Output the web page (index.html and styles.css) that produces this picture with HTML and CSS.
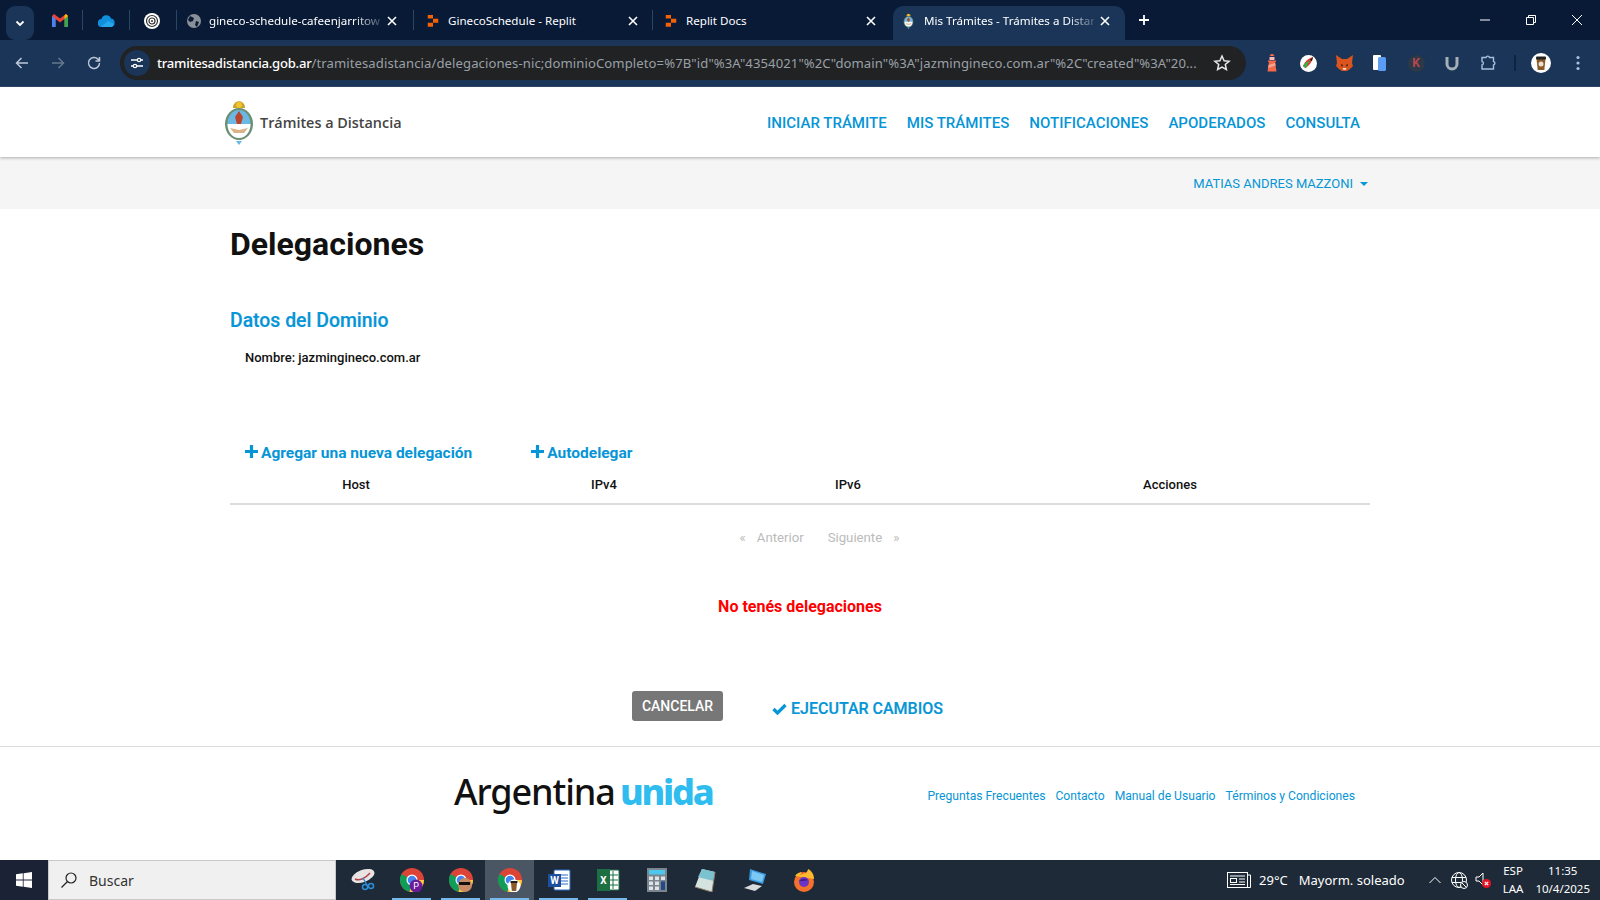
FILE: index.html
```html
<!DOCTYPE html>
<html lang="es">
<head>
  <meta charset="utf-8" />
  <title>Mis Trámites - Trámites a Distancia</title>
  <link rel="stylesheet" href="styles.css">
</head>
<body>
<svg class="defs" width="0" height="0">
  <defs>
    <symbol id="i-close" viewBox="0 0 12 12"><path d="M2 2l8 8M10 2l-8 8" stroke="#fff" stroke-width="1.6" fill="none"/></symbol>
    <symbol id="i-replit" viewBox="0 0 16 16"><path d="M2 1h6v4H2zM8 5.500h6v4.500H8zM2 10h6v4.500H2z" fill="#f26207"/></symbol>
    <symbol id="i-arms" viewBox="0 0 30 46">
      <path d="M9 9c0-9 12-9 12 0z" fill="#c9a227"/>
      <circle cx="15" cy="6" r="3" fill="#f2c230"/>
      <ellipse cx="15" cy="25" rx="14" ry="16" fill="#6b8f71"/>
      <ellipse cx="15" cy="25" rx="11.500" ry="14" fill="#6bb8e4"/>
      <path d="M3.500 25h23c0 8-5 14-11.500 14S3.500 33 3.500 25z" fill="#fff"/>
      <path d="M15 12l4 6-2 7h-4l-2-7z" fill="#b8452c"/>
      <path d="M6 29l9 2 9-2-4 5h-10z" fill="#d9b48a"/>
      <path d="M12 42h6l-3 4z" fill="#6bb8e4"/>
    </symbol>
    <symbol id="i-chrome" viewBox="0 0 24 24">
      <circle cx="12" cy="12" r="12" fill="#db4437"/>
      <path d="M12 12L1.600 6a12 12 0 0 0 8 17.800z" fill="#0f9d58"/>
      <path d="M12 12h12A12 12 0 0 1 9.600 23.800z" fill="#ffcd40"/>
      <circle cx="12" cy="12" r="5.500" fill="#fff"/>
      <circle cx="12" cy="12" r="4.300" fill="#4285f4"/>
    </symbol>
  </defs>
</svg>

<div class="tabstrip">
  <button class="tab-search"><svg width="12" height="12" viewBox="0 0 12 12"><path d="M2.500 4.500L6 8l3.500-3.500" stroke="#fff" stroke-width="1.800" fill="none"/></svg></button>
  <div class="pinned pinned-first">
    <svg width="16" height="13" viewBox="0 0 16 13"><path d="M0 2v11h3.500V5L8 8.500 12.500 5v8H16V2l-2-2L8 4.500 2 0z" fill="#ea4335"/><path d="M0 2v11h3.500V5z" fill="#4285f4"/><path d="M12.500 5v8H16V2z" fill="#34a853"/><path d="M14 0l2 2-3.500 3V1.500z" fill="#fbbc04"/></svg>
  </div>
  <i class="tab-sep"></i>
  <div class="pinned">
    <svg width="17" height="12" viewBox="0 0 17 12"><path d="M4 12a4 4 0 0 1-.5-8A5 5 0 0 1 13 3.500 4.300 4.300 0 0 1 13 12z" fill="#0f8fdc"/><path d="M3 12l7-6 6 3-2 3z" fill="#28a8ea"/></svg>
  </div>
  <i class="tab-sep"></i>
  <div class="pinned pinned-print">
    <svg width="16" height="16" viewBox="0 0 16 16"><circle cx="8" cy="8" r="8" fill="#fff"/><circle cx="8" cy="8" r="5.500" fill="none" stroke="#333" stroke-width="1.200"/><circle cx="8" cy="8" r="3" fill="none" stroke="#333" stroke-width="1.200"/><circle cx="8" cy="8" r="1" fill="#333"/></svg>
  </div>
  <i class="tab-sep"></i>
  <div class="tab tab-first">
    <svg class="tab-icon" width="14" height="14" viewBox="0 0 14 14"><circle cx="7" cy="7" r="7" fill="#8a9099"/><path d="M3 2l4 2-1 3-3 1-2-2zM9 7l3 1-2 5-2-2z" fill="#0a1a33"/></svg>
    <span class="tab-title">gineco-schedule-cafeenjarritow</span>
    <svg class="tab-x" width="12" height="12"><use href="#i-close"/></svg>
  </div>
  <i class="tab-sep"></i>
  <div class="tab tab-replit">
    <svg class="tab-icon" width="14" height="14"><use href="#i-replit"/></svg>
    <span class="tab-title">GinecoSchedule - Replit</span>
    <svg class="tab-x" width="12" height="12"><use href="#i-close"/></svg>
  </div>
  <i class="tab-sep"></i>
  <div class="tab tab-docs">
    <svg class="tab-icon" width="14" height="14"><use href="#i-replit"/></svg>
    <span class="tab-title">Replit Docs</span>
    <svg class="tab-x" width="12" height="12"><use href="#i-close"/></svg>
  </div>
  <div class="tab tab-active">
    <svg class="tab-icon" width="11" height="16"><use href="#i-arms"/></svg>
    <span class="tab-title">Mis Trámites - Trámites a Distan</span>
    <svg class="tab-x" width="12" height="12"><use href="#i-close"/></svg>
  </div>
  <svg class="tab-new" width="14" height="14" viewBox="0 0 14 14"><path d="M7 2v10M2 7h10" stroke="#fff" stroke-width="1.800"/></svg>
  <div class="win-btns">
    <svg width="12" height="12" viewBox="0 0 12 12"><path d="M1 6h10" stroke="#fff"/></svg>
    <svg width="12" height="12" viewBox="0 0 12 12"><path d="M1.500 3.500h7v7h-7zM3.500 3.500v-2h7v7h-2" stroke="#fff" fill="none"/></svg>
    <svg width="12" height="12" viewBox="0 0 12 12"><path d="M1 1l10 10M11 1L1 11" stroke="#fff"/></svg>
  </div>
</div>

<div class="toolbar">
  <svg class="nav-ic" width="16" height="16" viewBox="0 0 16 16"><path d="M14 8H3M7.500 3L2.500 8l5 5" stroke="#bcc8d8" stroke-width="1.500" fill="none"/></svg>
  <svg class="nav-ic" width="16" height="16" viewBox="0 0 16 16"><path d="M2 8h11M8.500 3l5 5-5 5" stroke="#66788f" stroke-width="1.500" fill="none"/></svg>
  <svg class="nav-ic" width="16" height="16" viewBox="0 0 16 16"><path d="M13.500 8a5.500 5.500 0 1 1-1.600-3.900L13.500 6M13.500 2v4h-4" stroke="#bcc8d8" stroke-width="1.500" fill="none"/></svg>
  <div class="urlbar">
    <span class="site-info"><svg width="14" height="14" viewBox="0 0 14 14"><path d="M1 4h6M11 4h2M1 10h2M7 10h6" stroke="#fff" stroke-width="1.300"/><circle cx="9" cy="4" r="1.700" fill="none" stroke="#fff" stroke-width="1.200"/><circle cx="5" cy="10" r="1.700" fill="none" stroke="#fff" stroke-width="1.200"/></svg></span>
    <span class="url"><b>tramitesadistancia.gob.ar</b>/tramitesadistancia/delegaciones-nic;dominioCompleto=%7B"id"%3A"4354021"%2C"domain"%3A"jazmingineco.com.ar"%2C"created"%3A"20...</span>
    <svg class="star" width="18" height="18" viewBox="0 0 18 18"><path d="M9 2l2.100 4.700 5 .5-3.800 3.300 1.100 5L9 13l-4.400 2.500 1.100-5L1.900 7.200l5-.5z" fill="none" stroke="#e6e8ea" stroke-width="1.500"/></svg>
  </div>
  <div class="ext-row">
    <span class="ext"><svg width="14" height="18" viewBox="0 0 14 18"><path d="M6 0h2l1.500 2H4.500z" fill="#f4694a"/><path d="M4.500 3h5v3h-5z" fill="#fbb"/><path d="M3 6.500h8v1.500H3z" fill="#f4694a"/><path d="M4 8h6l1.500 9.500h-9z" fill="#f4694a"/><path d="M3.600 11l6.600-2 .4 2.500-7.500 2.500z" fill="#f9a58e"/></svg></span>
    <span class="ext"><svg width="17" height="17" viewBox="0 0 17 17"><circle cx="8.500" cy="8.500" r="8.500" fill="#fff"/><path d="M3 11c2-5 6-8 10-9-1 5-4 9-8 11z" fill="#e8362c"/><path d="M3 11c2-3 5-5 7-6l-4 8z" fill="#2cb34a"/><path d="M10 5l3-3-1 4z" fill="#111"/></svg></span>
    <span class="ext"><svg width="17" height="16" viewBox="0 0 17 16"><path d="M0 0l6 4h5l6-4-1 8 1 3-3 3-3 2H6l-3-2-3-3 1-3z" fill="#d9541e"/><path d="M5 9l2 1-1 2zM12 9l-2 1 1 2z" fill="#25180f"/><path d="M6.500 13h4l-1 2h-2z" fill="#f5d5b8"/></svg></span>
    <span class="ext"><svg width="14" height="16" viewBox="0 0 14 16"><rect x="0" y="0" width="8" height="15" rx="1" fill="#fff"/><rect x="5" y="2" width="8" height="14" rx="1.500" fill="#5b9cf5"/></svg></span>
    <span class="ext"><span class="ext-k">K</span></span>
    <span class="ext"><svg width="14" height="15" viewBox="0 0 14 15"><path d="M2 1v7a5 5 0 0 0 10 0V1" fill="none" stroke="#a4afb8" stroke-width="3"/></svg></span>
    <span class="ext"><svg width="17" height="17" viewBox="0 0 17 17"><path d="M2 3.500h4a1.800 1.800 0 0 1 3.500 0h4v4a1.800 1.800 0 0 1 0 3.500v4H2v-4a1.800 1.800 0 0 0 0-3.500z" fill="none" stroke="#a9c0dc" stroke-width="1.400" transform="translate(0 -1)"/></svg></span>
    <i class="ext-sep"></i>
    <span class="avatar"><svg width="20" height="20" viewBox="0 0 20 20"><circle cx="10" cy="10" r="10" fill="#fff"/><path d="M5.500 6h9l-1.200 11H6.700z" fill="#8a5a2b"/><rect x="5" y="3.500" width="10" height="3" rx="1" fill="#222"/><circle cx="10" cy="11" r="2.500" fill="#e8e0d0"/></svg></span>
    <svg class="dots" width="4" height="16" viewBox="0 0 4 16"><circle cx="2" cy="2.500" r="1.600" fill="#a9c0dc"/><circle cx="2" cy="8" r="1.600" fill="#a9c0dc"/><circle cx="2" cy="13.500" r="1.600" fill="#a9c0dc"/></svg>
  </div>
</div>

<div class="page">
  <header class="site-header">
    <div class="container header-row">
      <a class="brand">
        <svg width="30" height="46"><use href="#i-arms"/></svg>
        <span>Trámites a Distancia</span>
      </a>
      <nav class="main-nav">
        <a>INICIAR TRÁMITE</a>
        <a>MIS TRÁMITES</a>
        <a>NOTIFICACIONES</a>
        <a>APODERADOS</a>
        <a>CONSULTA</a>
      </nav>
    </div>
  </header>
  <div class="user-band">
    <div class="container user-row"><a class="user-name">MATIAS ANDRES MAZZONI<i class="caret"></i></a></div>
  </div>

  <main class="container content">
    <h1>Delegaciones</h1>
    <h2>Datos del Dominio</h2>
    <p class="domain-name">Nombre: jazmingineco.com.ar</p>

    <div class="actions">
      <a><svg width="13" height="13" viewBox="0 0 13 13"><path d="M6.500 0v13M0 6.500h13" stroke="#0695d6" stroke-width="3.200"/></svg>Agregar una nueva delegación</a>
      <a><svg width="13" height="13" viewBox="0 0 13 13"><path d="M6.500 0v13M0 6.500h13" stroke="#0695d6" stroke-width="3.200"/></svg>Autodelegar</a>
    </div>

    <div class="table-head">
      <span>Host</span>
      <span>IPv4</span>
      <span>IPv6</span>
      <span>Acciones</span>
    </div>

    <div class="pager">
      <span>«</span><span class="pager-word">Anterior</span>
      <span class="pager-word pager-next">Siguiente</span><span>»</span>
    </div>

    <p class="empty">No tenés delegaciones</p>

    <div class="form-buttons">
      <button class="btn-cancel">CANCELAR</button>
      <a class="btn-run"><svg width="15" height="12" viewBox="0 0 15 12"><path d="M1.500 6l4 4 8-8" stroke="#0695d6" stroke-width="3.200" fill="none"/></svg>EJECUTAR CAMBIOS</a>
    </div>
  </main>

  <footer class="site-footer">
    <div class="container footer-row">
      <div class="slogan">Argentina <b>unida</b></div>
      <nav class="footer-nav">
        <a>Preguntas Frecuentes</a>
        <a>Contacto</a>
        <a>Manual de Usuario</a>
        <a>Términos y Condiciones</a>
      </nav>
    </div>
  </footer>
</div>

<div class="taskbar">
  <div class="start"><svg width="16" height="16" viewBox="0 0 16 16"><path d="M0 2.300l6.800-1v6.300H0zM7.600 1.200L16 0v7.600H7.600zM0 8.400h6.800v6.300l-6.800-1zM7.600 8.400H16V16l-8.400-1.200z" fill="#fff"/></svg></div>
  <div class="search-box">
    <svg width="18" height="18" viewBox="0 0 18 18"><circle cx="11" cy="7" r="5" fill="none" stroke="#222" stroke-width="1.200"/><path d="M7.500 10.500L1.500 16.500" stroke="#222" stroke-width="1.200"/></svg>
    <span>Buscar</span>
  </div>
  <div class="task-apps">
    <span class="app"><svg width="26" height="24" viewBox="0 0 26 24"><ellipse cx="13" cy="8" rx="12" ry="6" fill="#e9e4e4" transform="rotate(-20 13 8)"/><path d="M5 11c4 2 10 0 15-6" stroke="#b3434a" stroke-width="1.500" fill="none"/><path d="M13 10l4 7" stroke="#2a8fd8" stroke-width="1.500"/><circle cx="15" cy="19" r="2.500" fill="none" stroke="#2a8fd8" stroke-width="1.500"/><circle cx="21" cy="18" r="2.500" fill="none" stroke="#2a8fd8" stroke-width="1.500"/></svg></span>
    <span class="app open">
      <svg class="chrome" width="24" height="24" viewBox="0 0 24 24"><use href="#i-chrome"/></svg>
      <svg class="app-badge" width="24" height="24" viewBox="0 0 24 24"><circle cx="17" cy="18" r="6.500" fill="#6a1b9a"/><text x="17" y="21" font-size="9" fill="#fff" text-anchor="middle" font-family="Roboto">P</text></svg>
    </span>
    <span class="app open">
      <svg class="chrome" width="24" height="24" viewBox="0 0 24 24"><use href="#i-chrome"/></svg>
      <svg class="app-badge" width="24" height="24" viewBox="0 0 24 24"><circle cx="17" cy="17" r="7" fill="#c98a66"/><rect x="11" y="14" width="11" height="3" fill="#111"/></svg>
    </span>
    <span class="app open active">
      <svg class="chrome" width="24" height="24" viewBox="0 0 24 24"><use href="#i-chrome"/></svg>
      <svg class="app-badge" width="24" height="24" viewBox="0 0 24 24"><circle cx="17" cy="18" r="6.500" fill="#fff"/><path d="M14 15h6l-.8 8h-4.400z" fill="#8a5a2b"/><rect x="13.500" y="13" width="7" height="2" fill="#222"/></svg>
    </span>
    <span class="app open"><svg width="24" height="24" viewBox="0 0 24 24"><rect x="7" y="2" width="16" height="20" rx="1" fill="#fff" stroke="#2b6cc4"/><path d="M13 7h8M13 10h8M13 13h8M13 16h8" stroke="#2b6cc4"/><rect x="1" y="6" width="13" height="13" fill="#1e4f9c"/><text x="7.500" y="16" font-size="10" font-weight="700" fill="#fff" text-anchor="middle" font-family="Roboto">W</text></svg></span>
    <span class="app open"><svg width="24" height="24" viewBox="0 0 24 24"><rect x="7" y="2" width="16" height="20" rx="1" fill="#fff" stroke="#1d7044"/><path d="M13 7h9M13 12h9M13 17h9M17 3v18" stroke="#1d7044"/><rect x="1" y="1" width="13" height="22" fill="#1d7044"/><text x="7.500" y="16" font-size="10" font-weight="700" fill="#fff" text-anchor="middle" font-family="Roboto">X</text></svg></span>
    <span class="app"><svg width="20" height="24" viewBox="0 0 20 24"><rect width="20" height="24" fill="#7a858f"/><rect x="2" y="2" width="16" height="4.500" fill="#4cc8ee"/><g fill="#dfe3e6"><rect x="2" y="8.500" width="4" height="3.500"/><rect x="8" y="8.500" width="4" height="3.500"/><rect x="2" y="13.500" width="4" height="3.500"/><rect x="8" y="13.500" width="4" height="3.500"/><rect x="2" y="18.500" width="4" height="3.500"/><rect x="8" y="18.500" width="4" height="3.500"/><rect x="14" y="8.500" width="4" height="3.500"/></g><rect x="14" y="13.500" width="4" height="8.500" fill="#234a86"/></svg></span>
    <span class="app"><svg width="24" height="24" viewBox="0 0 24 24"><path d="M8 1l13 3-3 20L1 19z" fill="#d5e3e0"/><path d="M8 1l13 3-1.500 9L4 9z" fill="#7cc1d0"/><path d="M1 19l17 5 3-20" fill="none" stroke="#8b7b62"/></svg></span>
    <span class="app"><svg width="24" height="24" viewBox="0 0 24 24"><path d="M7 1l16 5-3 10-14-4z" fill="#3a9ae0"/><path d="M9 3l12 4-2 7-11-3z" fill="#7cc8f4"/><path d="M1 20l9-4 9 2-7 5z" fill="#d8dcde"/></svg></span>
    <span class="app"><svg width="24" height="24" viewBox="0 0 24 24"><circle cx="12" cy="14" r="10" fill="#f5702a"/><path d="M3 8c2-3 5-4 7-4l-2 3 6-2c1-1 2-3 2-4 4 2 6 6 6 10z" fill="#ffb92e"/><circle cx="12" cy="14" r="5" fill="#6a35c4"/><path d="M7 13c2-2 6-3 9-1-2 1-6 1-9 1z" fill="#3d1d8a"/></svg></span>
  </div>
  <div class="tray">
    <svg width="24" height="16" viewBox="0 0 24 16"><rect x=".5" y=".5" width="20" height="15" fill="none" stroke="#fff"/><path d="M20.500 3h3v12.500h-3" fill="none" stroke="#fff"/><path d="M3 4h15M3 12.500h15" stroke="#fff"/><rect x="3.500" y="6.500" width="6" height="4" fill="none" stroke="#fff"/><path d="M12 7h6M12 10h6" stroke="#fff"/></svg>
    <span class="tray-temp">29°C</span>
    <span class="tray-weather">Mayorm. soleado</span>
    <svg class="tray-caret" width="12" height="8" viewBox="0 0 12 8"><path d="M.5 7L6 1.500 11.500 7" stroke="#fff" fill="none"/></svg>
    <svg class="tray-globe" width="17" height="17" viewBox="0 0 17 17"><circle cx="8" cy="8" r="7.500" fill="none" stroke="#fff"/><ellipse cx="8" cy="8" rx="3.500" ry="7.500" fill="none" stroke="#fff"/><path d="M1 5.500h14M1 10.500h14" stroke="#fff"/><circle cx="13" cy="13" r="3.500" fill="#1f2c38" stroke="#fff"/><path d="M11 11l4 4" stroke="#fff"/></svg>
    <svg class="tray-vol" width="16" height="16" viewBox="0 0 16 16"><path d="M1 5h3l4-4v12L4 9H1z" fill="none" stroke="#fff"/><circle cx="11.500" cy="11.500" r="4.500" fill="#e81123"/><path d="M9.800 9.800l3.400 3.400M13.200 9.800l-3.400 3.400" stroke="#fff" stroke-width="1.200"/></svg>
    <div class="tray-lang"><span>ESP</span><span>LAA</span></div>
    <div class="tray-clock"><span>11:35</span><span>10/4/2025</span></div>
  </div>
</div>
</body>
</html>
```

FILE: styles.css
```css
*{box-sizing:border-box}
html,body{margin:0;height:100%;overflow:hidden;background:#fff;font-family:Roboto,"Liberation Sans",sans-serif}
a{cursor:pointer}
.defs{position:absolute}

/* barra de pestañas */
.tabstrip{height:40px;background:#081a36;display:flex;align-items:flex-start;color:#fff;font:11.600px "Noto Sans",sans-serif}
.tab-search{width:28px;height:34px;margin:6px 0 0 6px;background:#1a3558;border:0;border-radius:9px;display:flex;align-items:center;justify-content:center;padding:0}
.pinned{width:46px;height:29px;margin-top:6px;display:flex;align-items:center;justify-content:center}
.pinned-first{width:48px;padding-left:4px}
.pinned-print{padding-right:2px}
.tab-sep{width:1px;height:20px;margin-top:10px;background:#2a4568}
.tab{height:34px;margin-top:6px;padding-bottom:5px;display:flex;align-items:center;flex:none}
.tab-first{width:236px;padding-left:10px}
.tab-replit{width:238px;padding-left:12px}
.tab-docs{width:240px;padding-left:11px}
.tab-active{width:232px;padding-left:10px;background:#1a3558;border-radius:10px 10px 0 0}
.tab-icon{flex:none;margin-right:8px}
.tab-active .tab-icon{margin-right:10px}
.tab-title{flex:1;min-width:0;white-space:nowrap}
.tab-first .tab-title,.tab-active .tab-title{-webkit-mask-image:linear-gradient(90deg,#000 84%,transparent 104%);mask-image:linear-gradient(90deg,#000 84%,transparent 104%)}
.tab-x{flex:none;margin:0 10px}
.tab-first .tab-x{margin:0 15px 0 5px}
.tab-replit .tab-x{margin-right:13px}
.tab-docs .tab-x{margin-right:16px}
.tab-active .tab-x{margin:0 14px 0 5px}
.tab-new{margin:13px 0 0 12px}
.win-btns{margin-left:auto;display:flex;gap:34px;padding:14px 17px 0 0}

/* barra de direcciones */
.toolbar{height:47px;background:#1a3558;border-bottom:1px solid #30496b;display:flex;align-items:center;padding-left:14px}
.nav-ic{flex:none;margin-right:20px}
.nav-ic:nth-child(3){margin-right:18px}
.urlbar{width:1126px;height:34px;background:#212224;border-radius:17px;display:flex;align-items:center;padding:0 15px 0 4px;flex:none}
.site-info{width:26px;height:26px;border-radius:50%;background:#1a3558;display:flex;align-items:center;justify-content:center;flex:none}
.url{flex:1;white-space:nowrap;margin-left:7px;color:#9aa0a6;font:13.100px "Noto Sans",sans-serif;letter-spacing:.09px}
.url b{color:#fff;font-weight:500;letter-spacing:-.25px}
.star{flex:none;margin-left:6px}
.ext-row{display:flex;align-items:center;margin-left:8px}
.ext{width:36px;display:flex;justify-content:center}
.ext-k{width:17px;height:17px;border-radius:50%;background:#2d3848;color:#b8484e;font:700 12px/17px Roboto,sans-serif;text-align:center}
.ext-sep{width:2px;height:16px;background:#0d2340;margin:0 15px 0 8px}
.avatar{width:20px;height:20px;display:flex}
.dots{margin-left:25px}

/* página */
.page{height:773px;display:flex;flex-direction:column}
.container{width:1140px;margin:0 auto}
.site-header{height:70px;background:#fff;box-shadow:0 1px 3px rgba(0,0,0,.3);position:relative;flex:none}
.header-row{height:70px;display:flex;align-items:center;justify-content:space-between;padding-right:10px}
.brand{display:flex;align-items:center;gap:6px;margin-left:-6px;color:#444;font:600 14.400px "Open Sans",sans-serif}
.main-nav{display:flex;gap:20px;padding-top:1px}
.main-nav a{color:#0695d6;font-size:15.050px;font-weight:500}
.user-band{height:52px;background:#f5f5f5;flex:none}
.user-row{height:52px;display:flex;align-items:center;justify-content:flex-end;padding-right:2px}
.user-name{color:#0695d6;font-size:13px}
.caret{display:inline-block;margin-left:7px;vertical-align:middle;border:4px solid transparent;border-top-color:#0695d6;border-bottom:0}
.content{flex:1}
h1{margin:17px 0 0;font-size:32px;line-height:36px;font-weight:700;color:#111}
h2{margin:47px 0 0;font-size:19.400px;line-height:24px;font-weight:500;color:#0695d6;-webkit-text-stroke:.2px #0695d6}
.domain-name{margin:16px 0 0 15px;font-size:13px;line-height:18px;font-weight:500;color:#111}
.actions{display:flex;margin:75px 0 0 15px;gap:59px;line-height:22px;font-size:15.500px;font-weight:700;color:#0695d6}
.actions svg{margin-right:3px}
.table-head{display:grid;grid-template-columns:252px 244px 244px 400px;height:36px;margin-top:5px;border-bottom:2px solid #ddd;font-size:13px;font-weight:500;color:#111;text-align:center;padding-top:6px;line-height:20px}
.pager{display:flex;justify-content:center;gap:11px;margin-top:23px;padding-left:39px;font-size:13.200px;line-height:20px;color:#bbb}
.pager-next{margin-left:13px}
.empty{margin:49px 0 0;text-align:center;color:#f00;font-size:16px;line-height:20px;font-weight:700}
.form-buttons{display:flex;align-items:flex-start;margin:74px 0 0 402px}
.btn-cancel{width:91px;height:30px;background:#777;border:0;border-radius:3px;color:#fff;font:500 14px Roboto,sans-serif;padding:0}
.btn-run{margin:7px 0 0 49px;color:#0695d6;font-size:16px;line-height:22px;font-weight:500;display:flex;align-items:center;gap:4px;-webkit-text-stroke:.2px #0695d6}
.site-footer{height:114px;border-top:1px solid #ddd;flex:none}
.footer-row{display:flex;align-items:center;padding:24px 15px 0 224px}
.slogan{font:500 36px/42px "Noto Sans",sans-serif;color:#111;letter-spacing:-1.100px}
.slogan b{color:#2fbcef;font-weight:800;letter-spacing:-2.200px;margin-left:-3px}
.footer-nav{margin-left:auto;display:flex;gap:10px;font-size:12.150px;color:#0695d6;padding-top:8px}

/* barra de tareas */
.taskbar{height:40px;background:#1e2a38;display:flex;align-items:stretch;color:#fff;font:13px "Noto Sans",sans-serif}
.start{width:48px;display:flex;align-items:center;justify-content:center;background:#1c2236}
.search-box{width:288px;background:#f0f0f0;border:1px solid #c8c8c8;display:flex;align-items:center;gap:11px;padding-left:11px;color:#333;font-size:14px}
.task-apps{display:flex;margin-left:2px}
.app{width:49px;display:flex;align-items:center;justify-content:center;position:relative}
.app.open::after{content:"";position:absolute;left:5px;right:5px;bottom:0;height:2px;background:#76b9ed}
.app.active{background:#4a5663}
.app-badge{position:absolute;left:12px;top:8px}
.tray{margin-left:auto;display:flex;align-items:center;padding-right:10px;font-size:13px}
.tray-temp{margin-left:8px}
.tray-weather{margin-left:11px}
.tray-caret{margin-left:24px}
.tray-globe{margin-left:10px}
.tray-vol{margin-left:7px}
.tray-lang,.tray-clock{display:flex;flex-direction:column;align-items:center;font-size:11.500px;line-height:18px}
.tray-lang{margin-left:12px}
.tray-clock{margin-left:12px}
```
